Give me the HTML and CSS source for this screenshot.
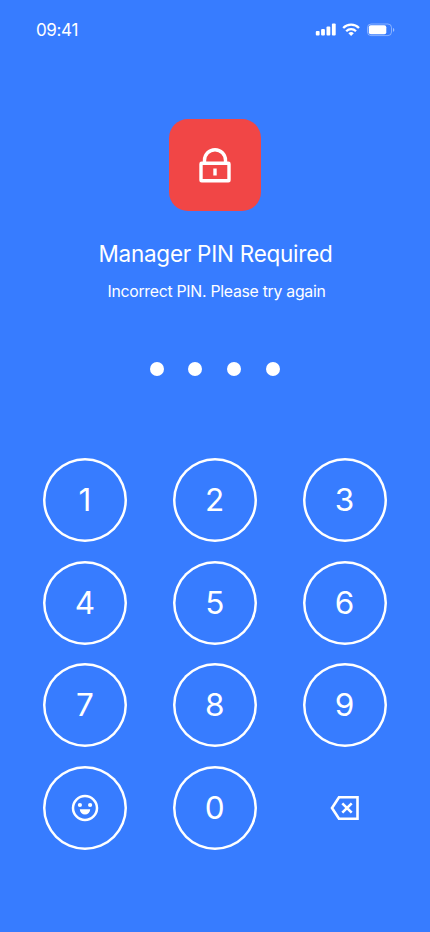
FILE: index.html
```html
<!DOCTYPE html>
<html lang="en">
<head>
<meta charset="utf-8">
<meta name="viewport" content="width=device-width, initial-scale=1">
<title>Manager PIN</title>
<link rel="stylesheet" href="styles.css">
</head>
<body>
<main class="screen">
  <header class="status">
    <span class="time">09:41</span>
    <svg class="indicators" width="80" height="14" viewBox="0 0 80 14" fill="#fff" aria-hidden="true">
      <rect x="0.8" y="8" width="3.8" height="4.6" rx="1"/>
      <rect x="6.1" y="6" width="3.8" height="6.6" rx="1"/>
      <rect x="11.5" y="3.4" width="3.8" height="9.2" rx="1"/>
      <rect x="16.9" y="0.6" width="3.8" height="12" rx="1"/>
      <g fill="none" stroke="#fff" stroke-width="2.3">
        <path d="M28.2 5a11 11 0 0 1 15.8 0"/>
        <path d="M31.2 8.2a7 7 0 0 1 9.8 0"/>
      </g>
      <path d="M33.4 10.3a4 4 0 0 1 5.4 0L36.1 13z"/>
      <rect x="52.5" y="1" width="24" height="11.6" rx="3.6" fill="none" stroke="#fff" stroke-opacity=".4"/>
      <rect x="53.8" y="2.3" width="17.5" height="9" rx="2"/>
      <path d="M78 5v3.8c.8-.3 1.3-1.1 1.3-1.9S78.8 5.3 78 5z" opacity=".5"/>
    </svg>
  </header>
  <div class="badge">
    <svg width="34" height="38" viewBox="0 0 34 38" fill="none" stroke="#fff" stroke-width="3.4" aria-hidden="true">
      <path d="M6.5 17V14.2a10.500 10.500 0 0 1 21 0V17"/>
      <rect x="3" y="17.300" width="28" height="17.500" rx=".6"/>
      <path d="M17 22.500v7"/>
    </svg>
  </div>
  <h1 class="title">Manager PIN Required</h1>
  <p class="message">Incorrect PIN. Please try again</p>
  <div class="dots"><i class="dot"></i><i class="dot"></i><i class="dot"></i><i class="dot"></i></div>
  <div class="keypad">
    <button class="key">1</button>
    <button class="key">2</button>
    <button class="key">3</button>
    <button class="key">4</button>
    <button class="key">5</button>
    <button class="key">6</button>
    <button class="key">7</button>
    <button class="key">8</button>
    <button class="key">9</button>
    <button class="key" aria-label="Face unlock">
      <svg width="28" height="28" viewBox="0 0 28 28" fill="#fff">
        <circle cx="14" cy="14" r="12" fill="none" stroke="#fff" stroke-width="2.5"/>
        <circle cx="8.9" cy="11" r="2.1"/>
        <circle cx="19.1" cy="11" r="2.1"/>
        <path d="M8.8 15.2h10.4a5.2 5.2 0 0 1-10.4 0z"/>
      </svg>
    </button>
    <button class="key">0</button>
    <button class="key key-plain" aria-label="Delete">
      <svg width="30" height="26" viewBox="0 0 30 26" fill="none" stroke="#fff" stroke-width="2.6">
        <path d="M9 2.3H27.5v21.4H9L2 13z"/>
        <path d="M12.3 8.3l9.400 9.400M21.700 8.300l-9.400 9.400"/>
      </svg>
    </button>
  </div>
</main>
</body>
</html>
```

FILE: styles.css
```css
* { box-sizing: border-box; }
body {
  margin: 0;
  background: #377cff;
  color: #fff;
  font-family: Inter, "Liberation Sans", sans-serif;
}
.screen {
  width: 430px;
  height: 932px;
  display: flex;
  flex-direction: column;
  align-items: center;
  overflow: hidden;
}
.status {
  width: 100%;
  height: 60px;
  padding: 0 35px 0 36px;
  display: flex;
  align-items: center;
  justify-content: space-between;
}
.time { font-size: 17px; letter-spacing: -0.35px; }
.badge {
  width: 92px;
  height: 92px;
  margin: 59px 0.6px 0 0;
  border-radius: 19px;
  background: #f14646;
  display: flex;
  align-items: center;
  justify-content: center;
}
.title {
  margin: 28px 0 0 1px;
  font-size: 22.5px;
  line-height: 30px;
  font-weight: 400;
  letter-spacing: -0.25px;
  white-space: nowrap;
}
.message {
  margin: 13px 0 0 3px;
  font-size: 15.8px;
  line-height: 20px;
  letter-spacing: -0.27px;
  white-space: nowrap;
}
.dots { display: flex; gap: 24.8px; margin: 60px 0.6px 0 0; }
.dot { width: 14px; height: 14px; border-radius: 50%; background: #fff; }
.keypad {
  margin: 82px 0.6px 0 0;
  display: grid;
  grid-template-columns: repeat(3, 84px);
  grid-auto-rows: 84px;
  column-gap: 45.8px;
  row-gap: 18.5px;
}
.key {
  padding: 0;
  border: 0;
  box-shadow: inset 0 0 0 2.5px #fff;
  border-radius: 50%;
  background: none;
  color: inherit;
  font: 400 31.5px/1 Inter, "Liberation Sans", sans-serif;
  display: flex;
  align-items: center;
  justify-content: center;
}
.key-plain { box-shadow: none; }
```
